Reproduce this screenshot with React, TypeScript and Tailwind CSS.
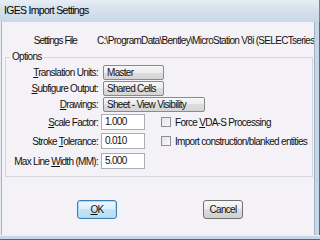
import React from "react";

const font = { fontFamily: '"Liberation Sans", Arial, sans-serif' };

function Btn({ children, w }: { children: React.ReactNode; w: string }) {
  return (
    <div
      className={`${w} h-[15px] ml-[2px] flex items-center pl-[3px] whitespace-nowrap overflow-hidden rounded-[2px] border border-[#8a8a8a] bg-[linear-gradient(to_bottom,#f7f7f7_0%,#ececec_50%,#dedede_50%,#d4d4d4_100%)] leading-none`}
    >
      {children}
    </div>
  );
}

function Field({ value }: { value: string }) {
  return (
    <div className="w-[44px] h-[16px] shrink-0 flex items-center pl-[3px] bg-white border border-[#a9adb5] leading-none">
      {value}
    </div>
  );
}

function Check({ children }: { children: React.ReactNode }) {
  return (
    <div className="flex items-center ml-[16px]">
      <div className="w-[10px] h-[10px] shrink-0 border border-[#8e8f8f] bg-[linear-gradient(135deg,#e3e3e3,#fbfbfb)]" />
      <span className="ml-[4px] whitespace-nowrap">{children}</span>
    </div>
  );
}

const label = "w-[95px] text-right shrink-0 pr-[3px] whitespace-nowrap";

export default function App() {
  return (
    <div
      className="w-[320px] h-[240px] overflow-hidden flex flex-col text-[10px] tracking-[-0.7px] text-[#111] bg-[#c6d8e7]"
      style={font}
    >
      {/* title bar */}
      <div className="h-[22px] shrink-0 flex items-center pl-[4px] bg-[linear-gradient(to_bottom,#e6edf5_0%,#d6e1ec_45%,#c8d7e6_100%)] border-r border-[#5d88a8] text-[10.5px] text-black">
        IGES Import Settings
      </div>
      <div className="flex flex-1 min-h-0">
        <div className="w-[2px] shrink-0 flex">
          <div className="w-[1px] bg-[#e4ebf2]" />
          <div className="w-[1px] bg-[#a8b3bf]" />
        </div>
        {/* client */}
        <div className="w-[312px] shrink-0 bg-[#f4f2f7] flex flex-col overflow-hidden">
          <div className="mt-[12px] h-[13px] flex items-center whitespace-nowrap leading-none">
            <div className="w-[75px] text-right shrink-0 tracking-[-0.9px]">Settings File</div>
            <div className="ml-[20px]">C:\ProgramData\Bentley\MicroStation V8i (SELECTseries)\</div>
          </div>
          <fieldset className="mt-[4px] ml-[3px] w-[308px] border border-[#d3d6dc] pb-[7px] pt-[2px] min-w-0">
            <legend className="ml-[4px] px-[2px] leading-[12px]">Options</legend>
            <div className="flex flex-col">
              <div className="flex items-center h-[15px]">
                <div className={label}><u>T</u>ranslation Units:</div>
                <Btn w="w-[61px]">Master</Btn>
              </div>
              <div className="flex items-center h-[15px] mt-[1px]">
                <div className={label}><u>S</u>ubfigure Output:</div>
                <Btn w="w-[61px]">Shared Cells</Btn>
              </div>
              <div className="flex items-center h-[15px] mt-[1px]">
                <div className={label}><u>D</u>rawings:</div>
                <Btn w="w-[102px]">Sheet - View Visibility</Btn>
              </div>
              <div className="flex items-center h-[16px] mt-[2px]">
                <div className={label}><u>S</u>cale Factor:</div>
                <Field value="1.000" />
                <Check>Force <u>V</u>DA-S Processing</Check>
              </div>
              <div className="flex items-center h-[16px] mt-[3px]">
                <div className={label}>Stroke <u>T</u>olerance:</div>
                <Field value="0.010" />
                <Check>Import construction/blanked entities</Check>
              </div>
              <div className="flex items-center h-[16px] mt-[4px]">
                <div className={label}>Max Line <u>W</u>idth (MM):</div>
                <Field value="5.000" />
              </div>
            </div>
          </fieldset>
          <div className="mt-[23px] flex pl-[75px]">
            <div className="w-[40px] h-[19px] flex items-center justify-center rounded-[3px] border border-[#3c7fb1] bg-[linear-gradient(to_bottom,#eef7fd_0%,#dceffb_50%,#c4e4f7_50%,#b6dcf3_100%)] shadow-[inset_0_0_0_1px_#a9d9f7]">
              <u>O</u>K
            </div>
            <div className="ml-[86px] w-[40px] h-[19px] flex items-center justify-center rounded-[3px] border border-[#707070] bg-[linear-gradient(to_bottom,#f7f7f7_0%,#ececec_50%,#dddddd_50%,#cfcfcf_100%)]">
              Cancel
            </div>
          </div>
        </div>
        <div className="flex-1 flex">
          <div className="w-[1px] bg-[#9ab1c6]" />
          <div className="flex-1 bg-[#c6d8e7]" />
          <div className="w-[1px] bg-[#3f6f8e]" />
        </div>
      </div>
      <div className="h-[5px] shrink-0 flex flex-col">
        <div className="h-[1px] bg-[#e8eef4]" />
        <div className="flex-1 bg-[#c6d8e7]" />
        <div className="h-[1px] bg-[#3f6f8e]" />
      </div>
    </div>
  );
}
